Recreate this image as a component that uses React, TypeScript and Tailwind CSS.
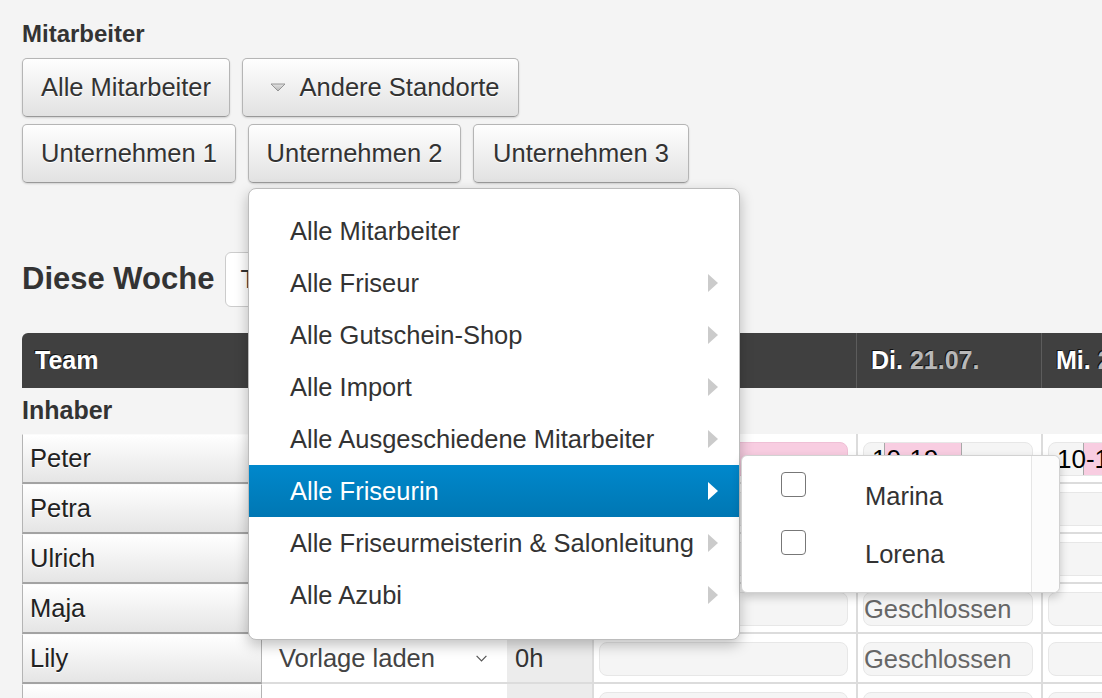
import type { ReactNode } from "react";

const btn =
  "inline-flex h-[59px] shrink-0 items-center justify-center rounded-[5px] border border-[#b5b5b5] border-b-[#999] bg-linear-to-b from-[#fefefe] to-[#e2e2e2] text-[25.5px] text-[#333] shadow-[0_1px_2px_rgba(0,0,0,0.15)] [text-shadow:0_1px_0_#fff]";

const menuItems = [
  { label: "Alle Mitarbeiter", sub: false },
  { label: "Alle Friseur", sub: true },
  { label: "Alle Gutschein-Shop", sub: true },
  { label: "Alle Import", sub: true },
  { label: "Alle Ausgeschiedene Mitarbeiter", sub: true },
  { label: "Alle Friseurin", sub: true, active: true },
  { label: "Alle Friseurmeisterin & Salonleitung", sub: true },
  { label: "Alle Azubi", sub: true },
];

type Day = { text?: string; pink?: boolean; bar?: [number, number]; closed?: boolean };

const rows: { name: string; mo: Day; di: Day; mi: Day }[] = [
  { name: "Peter", mo: { pink: true }, di: { text: "10-19", bar: [20, 78] }, mi: { text: "10-19", bar: [34, 120] } },
  { name: "Petra", mo: {}, di: {}, mi: {} },
  { name: "Ulrich", mo: {}, di: {}, mi: {} },
  { name: "Maja", mo: {}, di: { closed: true }, mi: {} },
  { name: "Lily", mo: {}, di: { closed: true }, mi: {} },
  { name: "Lisa", mo: {}, di: {}, mi: {} },
];

function Arrow({ white }: { white?: boolean }) {
  return (
    <span
      className={`h-0 w-0 shrink-0 border-y-[9px] border-l-[10px] border-y-transparent ${
        white ? "border-l-white" : "border-l-[#cbcbcb]"
      }`}
    />
  );
}

function Checkbox() {
  return <span className="block h-[25px] w-[25px] shrink-0 rounded-[4px] border-[1.5px] border-[#777] bg-white" />;
}

function SubMenu() {
  return (
    <div className="absolute left-[calc(100%+2px)] top-[-10px] z-30 flex h-[138px] w-[319px] rounded-[6px] border border-[#d2d2d2] bg-white text-[#333] shadow-[0_4px_10px_rgba(0,0,0,0.2)]">
      <div className="flex-1 pl-[39px] pt-[16px]">
        {["Marina", "Lorena"].map((n, i) => (
          <div key={n} className={`flex items-start ${i > 0 ? "mt-[19px]" : ""}`}>
            <Checkbox />
            <span className="ml-[59px] mt-[9px] text-[25.5px] leading-[30px]">{n}</span>
          </div>
        ))}
      </div>
      <div className="w-[28px] rounded-r-[6px] border-l border-[#e6e6e6] bg-[#fcfcfc]" />
    </div>
  );
}

function Dropdown() {
  return (
    <div className="absolute left-0 top-[64px] z-20 w-[492px] rounded-[8px] border border-[#bcbcbc] bg-white pb-[18px] pt-[16px] shadow-[0_5px_14px_rgba(0,0,0,0.25)] [text-shadow:none]">
      {menuItems.map((m) => (
        <div
          key={m.label}
          className={`relative flex h-[52px] items-center justify-between pl-[41px] pr-[21px] text-[25.5px] ${
            m.active ? "bg-linear-to-b from-[#0088cc] to-[#0077b3] text-white" : "text-[#333]"
          }`}
        >
          <span className="whitespace-nowrap">{m.label}</span>
          {m.sub && <Arrow white={m.active} />}
          {m.active && <SubMenu />}
        </div>
      ))}
    </div>
  );
}

function DayCell({ d, w }: { d: Day; w: string }) {
  return (
    <div className={`h-full shrink-0 border-b-2 border-l-2 border-[#dcdcdc] bg-white pl-[5px] ${w}`}>
      <div
        className={`relative mt-[8px] flex h-[34px] items-center overflow-hidden rounded-[8px] border ${
          d.pink ? "border-[#efc0d6] bg-[#f8cde1]" : "border-[#e7e7e7] bg-[#f5f5f5]"
        } ${w === "w-[264px]" ? "w-[249px]" : "w-[170px]"}`}
      >
        {d.bar && (
          <span
            className="absolute bottom-0 top-0 border-x border-[#a8a8a8] bg-[#f8cde1]"
            style={{ left: d.bar[0], width: d.bar[1] }}
          />
        )}
        {d.text && <span className="relative pl-[8px] text-[26px] text-black">{d.text}</span>}
        {d.closed && <span className="text-[25.5px] text-[#666]">Geschlossen</span>}
      </div>
    </div>
  );
}

function Row({ r }: { r: (typeof rows)[number] }) {
  return (
    <div className="flex h-[50px]">
      <div className="flex h-full w-[240px] shrink-0 items-center border-x border-b-2 border-t border-x-[#b4b4b4] border-b-[#a3a3a3] border-t-[#fbfbfb] bg-linear-to-b from-white to-[#e5e5e5] pl-[7px] text-[25.5px] text-[#222] [text-shadow:0_1px_0_#fff]">
        {r.name}
      </div>
      <div className="flex h-full w-[245px] shrink-0 items-center justify-between border-b-2 border-[#dcdcdc] bg-white pl-[17px] pr-[20px] text-[25.5px] text-[#444]">
        <span>Vorlage laden</span>
        <svg width="11" height="7" viewBox="0 0 11 7" fill="none">
          <polyline points="0.6,0.8 5.5,5.8 10.4,0.8" stroke="#555" strokeWidth="1.2" />
        </svg>
      </div>
      <div className="flex h-full w-[85px] shrink-0 items-center border-b-2 border-[#dcdcdc] bg-[#ececec] pl-[8px] text-[25.5px] text-[#333]">
        0h
      </div>
      <DayCell d={r.mo} w="w-[264px]" />
      <DayCell d={r.di} w="w-[185px]" />
      <DayCell d={r.mi} w="w-[185px]" />
    </div>
  );
}

function HeadCell({ day, date, w }: { day: string; date: string; w: string }) {
  return (
    <div className={`flex h-full shrink-0 items-center border-l border-[#5c5c5c] pl-[14px] ${w}`}>
      <span>{day}</span>
      <span className="ml-[7px] text-[#b8b8b8]">{date}</span>
    </div>
  );
}

function Btn({ children, className = "" }: { children: ReactNode; className?: string }) {
  return <div className={`${btn} ${className}`}>{children}</div>;
}

export default function App() {
  return (
    <div className="relative h-[698px] w-[1102px] overflow-hidden bg-[#f4f4f4] pl-[22px] pt-[20px] font-['Liberation_Sans',Arial,Helvetica,sans-serif]">
      <div className="text-[24px] font-bold leading-[28px] text-[#333]">Mitarbeiter</div>

      <div className="mt-[10px] flex gap-[12px]">
        <Btn className="w-[208px]">Alle Mitarbeiter</Btn>
        <Btn className="w-[277px] pl-[8px]">
          <svg width="16" height="9" viewBox="0 0 16 9" className="mr-[14px]">
            <defs>
              <linearGradient id="tri" x1="0" y1="0" x2="0" y2="1">
                <stop offset="0" stopColor="#e4e4e4" />
                <stop offset="1" stopColor="#b4b4b4" />
              </linearGradient>
            </defs>
            <polygon points="1,1 15,1 8,8" fill="url(#tri)" stroke="#8c8c8c" strokeWidth="0.9" strokeLinejoin="round" />
          </svg>
          Andere Standorte
        </Btn>
      </div>

      <div className="mt-[7px] flex gap-[12px]">
        <Btn className="w-[214px]">Unternehmen 1</Btn>
        <div className="relative z-20">
          <Btn className="w-[213px]">Unternehmen 2</Btn>
          <Dropdown />
        </div>
        <Btn className="w-[216px]">Unternehmen 3</Btn>
      </div>

      <div className="mt-[69px] flex h-[55px] items-center gap-[11px]">
        <h2 className="text-[31px] font-bold text-[#333]">Diese Woche</h2>
        <div className="flex h-[55px] w-[220px] items-center rounded-[6px] border border-[#cccccc] bg-white pl-[14px] text-[25.5px] text-[#333]">
          Tabelle
        </div>
      </div>

      <div className="mt-[26px] w-[1204px]">
        <div className="flex h-[55px] items-center rounded-tl-[6px] bg-[#404040] text-[25px] font-bold text-white [text-shadow:-1px_-1px_0_#111]">
          <div className="w-[570px] shrink-0 pl-[13px]">Team</div>
          <HeadCell day="Mo." date="20.07." w="w-[264px]" />
          <HeadCell day="Di." date="21.07." w="w-[185px]" />
          <HeadCell day="Mi." date="22.07." w="w-[185px]" />
        </div>
        <div className="flex h-[46px] items-center text-[25px] font-bold text-[#333]">Inhaber</div>
        {rows.map((r) => (
          <Row key={r.name} r={r} />
        ))}
      </div>
    </div>
  );
}
